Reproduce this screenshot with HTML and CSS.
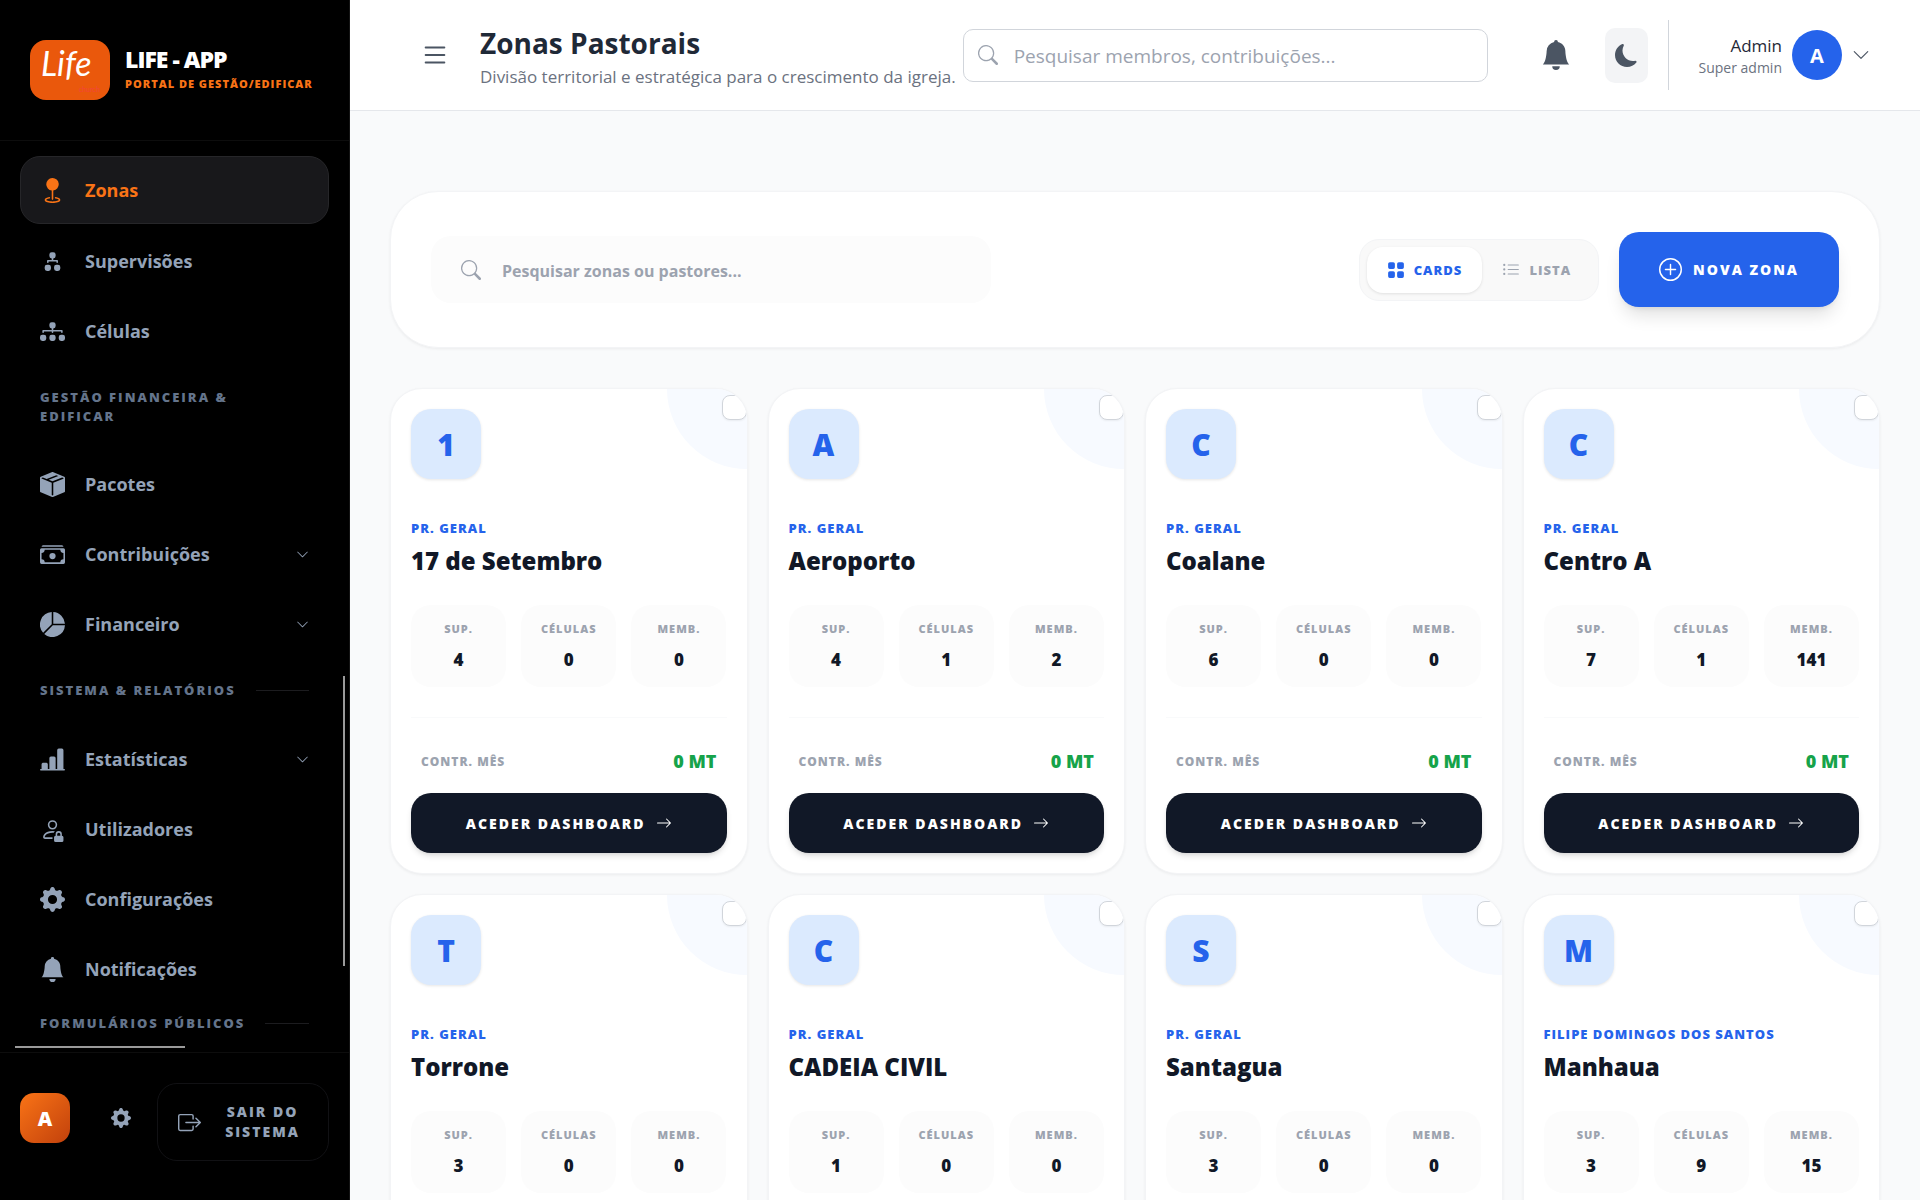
FILE: index.html
```html
<!DOCTYPE html>
<html lang="pt">
<head>
<meta charset="utf-8">
<meta name="viewport" content="width=device-width, initial-scale=1">
<title>Zonas Pastorais</title>
<link rel="stylesheet" href="styles.css">
</head>
<body>
<svg class="sprite" aria-hidden="true">
  <symbol id="i-geo" viewBox="0 0 16 16"><path d="M4 4a4 4 0 1 1 4.5 3.969V13.500a.5.5 0 0 1-1 0V7.970A4 4 0 0 1 4 3.999zm2.493 8.574a.5.5 0 0 1-.411.575c-.712.118-1.280.295-1.655.493a1.300 1.300 0 0 0-.37.265.3.3 0 0 0-.057.090V14l.002.008.016.033a.6.6 0 0 0 .145.150c.165.130.435.270.813.395.751.250 1.820.414 3.024.414s2.273-.163 3.024-.414c.378-.126.648-.265.813-.395a.6.6 0 0 0 .146-.150l.015-.033L12 14v-.004a.3.3 0 0 0-.057-.090 1.300 1.300 0 0 0-.37-.264c-.376-.198-.943-.375-1.655-.493a.5.5 0 1 1 .164-.986c.77.127 1.452.328 1.957.594C12.500 13 13 13.400 13 14c0 .426-.26.752-.544.977-.29.228-.68.413-1.116.558-.878.293-2.059.465-3.340.465s-2.462-.172-3.340-.465c-.436-.145-.826-.33-1.116-.558C3.260 14.752 3 14.426 3 14c0-.599.5-1 .961-1.243.505-.266 1.187-.467 1.957-.594a.5.5 0 0 1 .575.411"/></symbol>
  <symbol id="i-diagram2" viewBox="0 0 16 16"><path d="M6 3.5A1.5 1.5 0 0 1 7.5 2h1A1.5 1.5 0 0 1 10 3.5v1A1.5 1.5 0 0 1 8.5 6v1H11a.5.5 0 0 1 .5.5v1a.5.5 0 0 1-1 0V8h-5v.5a.5.5 0 0 1-1 0v-1A.5.5 0 0 1 5 7h2.500V6A1.5 1.5 0 0 1 6 4.500zm-3 8A1.5 1.5 0 0 1 4.500 10h1A1.5 1.5 0 0 1 7 11.500v1A1.5 1.5 0 0 1 5.500 14h-1A1.5 1.5 0 0 1 3 12.500zm6 0a1.5 1.5 0 0 1 1.500-1.500h1a1.5 1.5 0 0 1 1.500 1.500v1a1.5 1.5 0 0 1-1.500 1.500h-1A1.5 1.5 0 0 1 9 12.500z"/></symbol>
  <symbol id="i-diagram3" viewBox="0 0 16 16"><path d="M6 3.5A1.5 1.5 0 0 1 7.5 2h1A1.5 1.5 0 0 1 10 3.5v1A1.5 1.5 0 0 1 8.5 6v1H14a.5.5 0 0 1 .5.5v1a.5.5 0 0 1-1 0V8h-5v.5a.5.5 0 0 1-1 0V8h-5v.5a.5.5 0 0 1-1 0v-1A.5.5 0 0 1 2 7h5.500V6A1.5 1.5 0 0 1 6 4.500zm-6 8A1.5 1.5 0 0 1 1.500 10h1A1.5 1.5 0 0 1 4 11.500v1A1.5 1.5 0 0 1 2.500 14h-1A1.5 1.5 0 0 1 0 12.500zm6 0A1.5 1.5 0 0 1 7.500 10h1a1.5 1.5 0 0 1 1.500 1.500v1A1.5 1.5 0 0 1 8.500 14h-1A1.5 1.5 0 0 1 6 12.500zm6 0a1.5 1.5 0 0 1 1.500-1.500h1a1.5 1.5 0 0 1 1.500 1.500v1a1.5 1.5 0 0 1-1.500 1.500h-1a1.5 1.5 0 0 1-1.500-1.500z"/></symbol>
  <symbol id="i-box" viewBox="0 0 16 16"><path fill-rule="evenodd" d="M15.528 2.973a.75.75 0 0 1 .472.696v8.662a.75.75 0 0 1-.472.696l-7.250 2.900a.75.75 0 0 1-.557 0l-7.250-2.900A.75.75 0 0 1 0 12.331V3.669a.75.75 0 0 1 .471-.696L7.443.184l.01-.003.268-.108a.75.75 0 0 1 .558 0l.269.108.01.003zM10.404 2 4.250 4.461 1.846 3.500 1 3.839v.4l6.500 2.600v7.922l.5.200.5-.200V6.840l6.500-2.600v-.4l-.846-.339L8 5.961 5.596 5l6.154-2.461z"/></symbol>
  <symbol id="i-cash" viewBox="0 0 16 16"><path d="M1 3a1 1 0 0 1 1-1h12a1 1 0 0 1 1 1zm7 8a2 2 0 1 0 0-4 2 2 0 0 0 0 4"/><path d="M0 5a1 1 0 0 1 1-1h14a1 1 0 0 1 1 1v8a1 1 0 0 1-1 1H1a1 1 0 0 1-1-1zm3 0a2 2 0 0 1-2 2v4a2 2 0 0 1 2 2h10a2 2 0 0 1 2-2V7a2 2 0 0 1-2-2z"/></symbol>
  <symbol id="i-pie" viewBox="0 0 16 16"><path d="M15.985 8.500H8.207l-5.500 5.500a8 8 0 0 0 13.277-5.500zM2 13.292A8 8 0 0 1 7.500.015v7.778zM8.500.015V7.500h7.485A8 8 0 0 0 8.500.015"/></symbol>
  <symbol id="i-bars" viewBox="0 0 16 16"><path d="M11 2a1 1 0 0 1 1-1h2a1 1 0 0 1 1 1v12h.5a.5.5 0 0 1 0 1H.5a.5.5 0 0 1 0-1H1v-3a1 1 0 0 1 1-1h2a1 1 0 0 1 1 1v3h1V7a1 1 0 0 1 1-1h2a1 1 0 0 1 1 1v7h1z"/></symbol>
  <symbol id="i-person" viewBox="0 0 16 16"><path d="M11 5a3 3 0 1 1-6 0 3 3 0 0 1 6 0M8 7a2 2 0 1 0 0-4 2 2 0 0 0 0 4m0 5.996V14H3s-1 0-1-1 1-4 6-4q.845.002 1.544.107a4.500 4.500 0 0 0-.803.918A11 11 0 0 0 8 10c-2.290 0-3.516.68-4.168 1.332-.678.678-.83 1.418-.832 1.664zM9 13a1 1 0 0 1 1-1v-1a2 2 0 1 1 4 0v1a1 1 0 0 1 1 1v2a1 1 0 0 1-1 1h-4a1 1 0 0 1-1-1zm3-3a1 1 0 0 0-1 1v1h2v-1a1 1 0 0 0-1-1"/></symbol>
  <symbol id="i-gear" viewBox="0 0 16 16"><path d="M9.405 1.050c-.413-1.400-2.397-1.400-2.810 0l-.1.340a1.464 1.464 0 0 1-2.105.872l-.31-.17c-1.283-.698-2.686.705-1.987 1.987l.169.311c.446.82.023 1.841-.872 2.105l-.34.1c-1.400.413-1.400 2.397 0 2.810l.34.1a1.464 1.464 0 0 1 .872 2.105l-.17.31c-.698 1.283.705 2.686 1.987 1.987l.311-.169a1.464 1.464 0 0 1 2.105.872l.1.34c.413 1.400 2.397 1.400 2.810 0l.1-.34a1.464 1.464 0 0 1 2.105-.872l.31.17c1.283.698 2.686-.705 1.987-1.987l-.169-.311a1.464 1.464 0 0 1 .872-2.105l.34-.1c1.400-.413 1.400-2.397 0-2.810l-.34-.1a1.464 1.464 0 0 1-.872-2.105l.17-.31c.698-1.283-.705-2.686-1.987-1.987l-.311.169a1.464 1.464 0 0 1-2.105-.872zM8 10.930a2.929 2.929 0 1 1 0-5.860 2.929 2.929 0 0 1 0 5.858z"/></symbol>
  <symbol id="i-bell" viewBox="0 0 16 16"><path d="M8 16a2 2 0 0 0 2-2H6a2 2 0 0 0 2 2m.995-14.901a1 1 0 1 0-1.990 0A5 5 0 0 0 3 6c0 1.098-.5 6-2 7h14c-1.500-1-2-5.902-2-7 0-2.420-1.720-4.440-4.005-4.901"/></symbol>
  <symbol id="i-moon" viewBox="0 0 16 16"><path d="M6 .278a.77.77 0 0 1 .08.858 7.200 7.200 0 0 0-.878 3.460c0 4.021 3.278 7.277 7.318 7.277q.792-.001 1.533-.16a.79.79 0 0 1 .81.316.73.73 0 0 1-.031.893A8.350 8.350 0 0 1 8.344 16C3.734 16 0 12.286 0 7.710 0 4.266 2.114 1.312 5.124.060A.75.75 0 0 1 6 .278"/></symbol>
  <symbol id="i-search" viewBox="0 0 16 16"><path d="M11.742 10.344a6.500 6.500 0 1 0-1.397 1.398h-.001q.044.060.098.115l3.850 3.850a1 1 0 0 0 1.415-1.414l-3.850-3.850a1 1 0 0 0-.115-.1zM12 6.500a5.500 5.500 0 1 1-11 0 5.500 5.500 0 0 1 11 0"/></symbol>
  <symbol id="i-list" viewBox="0 0 16 16"><path d="M2.500 12a.5.5 0 0 1 .5-.5h10a.5.5 0 0 1 0 1H3a.5.5 0 0 1-.5-.5m0-4a.5.5 0 0 1 .5-.5h10a.5.5 0 0 1 0 1H3a.5.5 0 0 1-.5-.5m0-4a.5.5 0 0 1 .5-.5h10a.5.5 0 0 1 0 1H3a.5.5 0 0 1-.5-.5"/></symbol>
  <symbol id="i-listul" viewBox="0 0 16 16"><path d="M5 11.500a.5.5 0 0 1 .5-.5h9a.5.5 0 0 1 0 1h-9a.5.5 0 0 1-.5-.5m0-4a.5.5 0 0 1 .5-.5h9a.5.5 0 0 1 0 1h-9a.5.5 0 0 1-.5-.5m0-4a.5.5 0 0 1 .5-.5h9a.5.5 0 0 1 0 1h-9a.5.5 0 0 1-.5-.5m-3 1a1 1 0 1 0 0-2 1 1 0 0 0 0 2m0 4a1 1 0 1 0 0-2 1 1 0 0 0 0 2m0 4a1 1 0 1 0 0-2 1 1 0 0 0 0 2"/></symbol>
  <symbol id="i-grid" viewBox="0 0 16 16"><path d="M1 2.500A1.5 1.5 0 0 1 2.500 1h3A1.5 1.5 0 0 1 7 2.500v3A1.5 1.5 0 0 1 5.500 7h-3A1.5 1.5 0 0 1 1 5.500zm8 0A1.5 1.5 0 0 1 10.500 1h3A1.5 1.5 0 0 1 15 2.500v3A1.5 1.5 0 0 1 13.500 7h-3A1.5 1.5 0 0 1 9 5.500zm-8 8A1.5 1.5 0 0 1 2.500 9h3A1.5 1.5 0 0 1 7 10.500v3A1.5 1.5 0 0 1 5.500 15h-3A1.5 1.5 0 0 1 1 13.500zm8 0A1.5 1.5 0 0 1 10.500 9h3a1.5 1.5 0 0 1 1.500 1.500v3a1.5 1.5 0 0 1-1.500 1.500h-3A1.5 1.5 0 0 1 9 13.500z"/></symbol>
  <symbol id="i-plus" viewBox="0 0 16 16"><path d="M8 15A7 7 0 1 1 8 1a7 7 0 0 1 0 14m0 1A8 8 0 1 0 8 0a8 8 0 0 0 0 16"/><path d="M8 4a.5.5 0 0 1 .5.5v3h3a.5.5 0 0 1 0 1h-3v3a.5.5 0 0 1-1 0v-3h-3a.5.5 0 0 1 0-1h3v-3A.5.5 0 0 1 8 4"/></symbol>
  <symbol id="i-arrow" viewBox="0 0 16 16"><path d="M1 8a.5.5 0 0 1 .5-.5h11.793l-3.147-3.146a.5.5 0 0 1 .708-.708l4 4a.5.5 0 0 1 0 .708l-4 4a.5.5 0 0 1-.708-.708L13.293 8.500H1.500A.5.5 0 0 1 1 8"/></symbol>
  <symbol id="i-exit" viewBox="0 0 16 16"><path d="M10 12.500a.5.5 0 0 1-.5.5h-8a.5.5 0 0 1-.5-.5v-9a.5.5 0 0 1 .5-.5h8a.5.5 0 0 1 .5.5v2a.5.5 0 0 0 1 0v-2A1.5 1.5 0 0 0 9.500 2h-8A1.5 1.5 0 0 0 0 3.500v9A1.5 1.5 0 0 0 1.500 14h8a1.5 1.5 0 0 0 1.500-1.500v-2a.5.5 0 0 0-1 0z"/><path d="M15.854 8.354a.5.5 0 0 0 0-.708l-3-3a.5.5 0 0 0-.708.708L14.293 7.500H5.500a.5.5 0 0 0 0 1h8.793l-2.147 2.146a.5.5 0 0 0 .708.708z"/></symbol>
  <symbol id="i-chev" viewBox="0 0 16 16"><path d="M1.646 4.646a.5.5 0 0 1 .708 0L8 10.293l5.646-5.647a.5.5 0 0 1 .708.708l-6 6a.5.5 0 0 1-.708 0l-6-6a.5.5 0 0 1 0-.708"/></symbol>
</svg>

<div class="app">
  <aside class="sidebar">
    <div class="brand">
      <svg class="brand-logo" viewBox="0 0 80 60" role="img" aria-label="Life church">
        <text class="logo-name" x="11" y="36">Life</text>
        <text class="logo-sub" x="49" y="52">church</text>
      </svg>
      <div>
        <div class="brand-name">LIFE - APP</div>
        <div class="brand-sub">PORTAL DE GESTÃO/EDIFICAR</div>
      </div>
    </div>
    <nav class="nav">
      <a class="nav-item active" href="#"><svg class="icon-25"><use href="#i-geo"/></svg>Zonas</a>
      <a class="nav-item" href="#"><svg class="icon-25"><use href="#i-diagram2"/></svg>Supervisões</a>
      <a class="nav-item" href="#"><svg class="icon-25"><use href="#i-diagram3"/></svg>Células</a>
      <h2 class="nav-heading">GESTÃO FINANCEIRA &amp; EDIFICAR</h2>
      <a class="nav-item" href="#"><svg class="icon-25"><use href="#i-box"/></svg>Pacotes</a>
      <a class="nav-item" href="#"><svg class="icon-25"><use href="#i-cash"/></svg>Contribuições<svg class="chevron"><use href="#i-chev"/></svg></a>
      <a class="nav-item" href="#"><svg class="icon-25"><use href="#i-pie"/></svg>Financeiro<svg class="chevron"><use href="#i-chev"/></svg></a>
      <h2 class="nav-heading ruled">SISTEMA &amp; RELATÓRIOS</h2>
      <a class="nav-item" href="#"><svg class="icon-25"><use href="#i-bars"/></svg>Estatísticas<svg class="chevron"><use href="#i-chev"/></svg></a>
      <a class="nav-item" href="#"><svg class="icon-25"><use href="#i-person"/></svg>Utilizadores</a>
      <a class="nav-item" href="#"><svg class="icon-25"><use href="#i-gear"/></svg>Configurações</a>
      <a class="nav-item" href="#"><svg class="icon-25"><use href="#i-bell"/></svg>Notificações</a>
      <h2 class="nav-heading ruled last">FORMULÁRIOS PÚBLICOS</h2>
      <span class="thumb-y"></span>
      <span class="thumb-x"></span>
    </nav>
    <div class="side-foot">
      <span class="side-avatar">A</span>
      <button class="side-gear" aria-label="Definições"><svg class="icon-20"><use href="#i-gear"/></svg></button>
      <button class="logout"><svg class="icon-23"><use href="#i-exit"/></svg><span>SAIR DO SISTEMA</span></button>
    </div>
  </aside>

  <div class="page">
    <header class="topbar">
      <button class="menu" aria-label="Menu"><svg class="icon-30"><use href="#i-list"/></svg></button>
      <div class="heading">
        <h1>Zonas Pastorais</h1>
        <p>Divisão territorial e estratégica para o crescimento da igreja.</p>
      </div>
      <label class="top-search"><svg class="icon-20"><use href="#i-search"/></svg><input type="text" aria-label="Pesquisar" placeholder="Pesquisar membros, contribuições..."></label>
      <button class="bell" aria-label="Notificações"><svg class="icon-30"><use href="#i-bell"/></svg></button>
      <button class="moon" aria-label="Modo escuro"><svg class="icon-23"><use href="#i-moon"/></svg></button>
      <button class="user">
        <span class="user-text"><span class="user-name">Admin</span><span class="user-role">Super admin</span></span>
        <span class="user-avatar">A</span>
        <svg class="icon-18"><use href="#i-chev"/></svg>
      </button>
    </header>

    <main class="content">
      <section class="toolbar">
        <label class="zone-search"><svg class="icon-20"><use href="#i-search"/></svg><input type="text" aria-label="Pesquisar zonas" placeholder="Pesquisar zonas ou pastores..."></label>
        <div class="toggle">
          <button class="on"><svg class="icon-18"><use href="#i-grid"/></svg>CARDS</button>
          <button><svg class="icon-18"><use href="#i-listul"/></svg>LISTA</button>
        </div>
        <button class="new-zone"><svg class="icon-23"><use href="#i-plus"/></svg>NOVA ZONA</button>
      </section>

      <section class="cards">
        <article class="card">
          <input class="pick" type="checkbox" aria-label="Selecionar 17 de Setembro">
          <span class="badge">1</span>
          <p class="pastor">PR. GERAL</p>
          <h3>17 de Setembro</h3>
          <dl class="stats"><div><dt>SUP.</dt><dd>4</dd></div><div><dt>CÉLULAS</dt><dd>0</dd></div><div><dt>MEMB.</dt><dd>0</dd></div></dl>
          <div class="month"><span>CONTR. MÊS</span><strong>0 MT</strong></div>
          <a class="open" href="#">ACEDER DASHBOARD<svg class="icon-16"><use href="#i-arrow"/></svg></a>
        </article>
        <article class="card">
          <input class="pick" type="checkbox" aria-label="Selecionar Aeroporto">
          <span class="badge">A</span>
          <p class="pastor">PR. GERAL</p>
          <h3>Aeroporto</h3>
          <dl class="stats"><div><dt>SUP.</dt><dd>4</dd></div><div><dt>CÉLULAS</dt><dd>1</dd></div><div><dt>MEMB.</dt><dd>2</dd></div></dl>
          <div class="month"><span>CONTR. MÊS</span><strong>0 MT</strong></div>
          <a class="open" href="#">ACEDER DASHBOARD<svg class="icon-16"><use href="#i-arrow"/></svg></a>
        </article>
        <article class="card">
          <input class="pick" type="checkbox" aria-label="Selecionar Coalane">
          <span class="badge">C</span>
          <p class="pastor">PR. GERAL</p>
          <h3>Coalane</h3>
          <dl class="stats"><div><dt>SUP.</dt><dd>6</dd></div><div><dt>CÉLULAS</dt><dd>0</dd></div><div><dt>MEMB.</dt><dd>0</dd></div></dl>
          <div class="month"><span>CONTR. MÊS</span><strong>0 MT</strong></div>
          <a class="open" href="#">ACEDER DASHBOARD<svg class="icon-16"><use href="#i-arrow"/></svg></a>
        </article>
        <article class="card">
          <input class="pick" type="checkbox" aria-label="Selecionar Centro A">
          <span class="badge">C</span>
          <p class="pastor">PR. GERAL</p>
          <h3>Centro A</h3>
          <dl class="stats"><div><dt>SUP.</dt><dd>7</dd></div><div><dt>CÉLULAS</dt><dd>1</dd></div><div><dt>MEMB.</dt><dd>141</dd></div></dl>
          <div class="month"><span>CONTR. MÊS</span><strong>0 MT</strong></div>
          <a class="open" href="#">ACEDER DASHBOARD<svg class="icon-16"><use href="#i-arrow"/></svg></a>
        </article>
        <article class="card">
          <input class="pick" type="checkbox" aria-label="Selecionar Torrone">
          <span class="badge">T</span>
          <p class="pastor">PR. GERAL</p>
          <h3>Torrone</h3>
          <dl class="stats"><div><dt>SUP.</dt><dd>3</dd></div><div><dt>CÉLULAS</dt><dd>0</dd></div><div><dt>MEMB.</dt><dd>0</dd></div></dl>
        </article>
        <article class="card">
          <input class="pick" type="checkbox" aria-label="Selecionar CADEIA CIVIL">
          <span class="badge">C</span>
          <p class="pastor">PR. GERAL</p>
          <h3>CADEIA CIVIL</h3>
          <dl class="stats"><div><dt>SUP.</dt><dd>1</dd></div><div><dt>CÉLULAS</dt><dd>0</dd></div><div><dt>MEMB.</dt><dd>0</dd></div></dl>
        </article>
        <article class="card">
          <input class="pick" type="checkbox" aria-label="Selecionar Santagua">
          <span class="badge">S</span>
          <p class="pastor">PR. GERAL</p>
          <h3>Santagua</h3>
          <dl class="stats"><div><dt>SUP.</dt><dd>3</dd></div><div><dt>CÉLULAS</dt><dd>0</dd></div><div><dt>MEMB.</dt><dd>0</dd></div></dl>
        </article>
        <article class="card">
          <input class="pick" type="checkbox" aria-label="Selecionar Manhaua">
          <span class="badge">M</span>
          <p class="pastor">FILIPE DOMINGOS DOS SANTOS</p>
          <h3>Manhaua</h3>
          <dl class="stats"><div><dt>SUP.</dt><dd>3</dd></div><div><dt>CÉLULAS</dt><dd>9</dd></div><div><dt>MEMB.</dt><dd>15</dd></div></dl>
        </article>
      </section>
    </main>
  </div>
</div>
</body>
</html>
```
FILE: styles.css
```css
* { box-sizing: border-box; margin: 0; padding: 0; }
body { font-family: "Open Sans", "Noto Sans", sans-serif; color: #111827; background: #f9fafb; }
button, input { font: inherit; color: inherit; border: 0; background: none; }
button { cursor: pointer; }
a { color: inherit; text-decoration: none; }
svg { fill: currentColor; flex: none; }
.sprite { display: none; }
.icon-16 { width: 16px; height: 16px; }
.icon-18 { width: 18px; height: 18px; }
.icon-20 { width: 20px; height: 20px; }
.icon-23 { width: 23px; height: 23px; }
.icon-25 { width: 25px; height: 25px; }
.icon-30 { width: 30px; height: 30px; }

.app { display: grid; grid-template-columns: 350px minmax(0, 1fr); height: 100vh; overflow: hidden; }

/* Sidebar */
.sidebar { display: flex; flex-direction: column; min-height: 0; background: #000; border-right: 1px solid #141414; color: #94a3b8; }
.brand { display: flex; gap: 15px; padding: 40px 0 40px 30px; border-bottom: 1px solid #0d0d0d; white-space: nowrap; }
.brand-logo { width: 80px; height: 60px; border-radius: 16px; background: #ea580c; }
.logo-name { font: italic 34px "Lato", sans-serif; fill: #fff; }
.logo-sub { font: 7px "Lato", sans-serif; fill: #f4433c; }
.brand-name { margin-top: 4px; font-size: 23px; line-height: 30px; font-weight: 800; letter-spacing: -1px; color: #fff; }
.brand-sub { font-size: 11px; line-height: 20px; font-weight: 800; letter-spacing: 1px; color: #f97316; }
.nav { position: relative; flex: 1; min-height: 0; display: flex; flex-direction: column; gap: 4px; padding: 15px 20px 0; overflow: hidden; }
.nav-item { flex: none; display: flex; align-items: center; gap: 20px; height: 66px; padding: 0 20px; border-radius: 20px; font-size: 18px; font-weight: 700; }
.nav-item.active { height: 68px; padding: 0 19px; background: #18181b; border: 1px solid #262629; color: #f97316; }
.chevron { width: 13px; height: 13px; margin-left: auto; }
.nav-heading { flex: none; display: flex; align-items: center; gap: 20px; padding: 20px 40px 21px 20px; font-size: 13px; line-height: 19px; font-weight: 800; letter-spacing: 2px; color: #64748b; }
.nav-heading.ruled::after { content: ""; flex: 1; height: 1px; background: #1c1c1f; }
.nav-heading.ruled { white-space: nowrap; padding-right: 20px; padding-bottom: 22px; }
.nav-heading.last { padding-top: 8px; }
.thumb-y { position: absolute; right: 4px; top: 535px; width: 2px; height: 290px; background: #9a9a9a; }
.thumb-x { position: absolute; left: 15px; bottom: 4px; width: 170px; height: 2px; background: #9a9a9a; }
.side-foot { display: flex; align-items: center; padding: 30px 20px 39px; border-top: 1px solid #0d0d0d; }
.side-avatar, .side-gear { display: grid; place-items: center; height: 50px; margin-bottom: 8px; }
.side-avatar { width: 50px; border-radius: 14px; background: linear-gradient(135deg, #f97316, #c2410c); color: #fff; font-size: 20px; font-weight: 800; }
.side-gear { width: 102px; }
.logout { flex: 1; display: flex; align-items: center; gap: 16px; height: 78px; margin-left: -15px; padding: 0 20px; border: 1px solid #111114; border-radius: 20px; font-size: 14px; line-height: 20px; font-weight: 800; letter-spacing: 2px; }
.logout span { flex: 1; }

/* Top bar */
.page { min-width: 0; overflow: hidden; }
.topbar { display: flex; align-items: center; height: 111px; padding: 0 40px; background: #fff; border-bottom: 1px solid #e5e7eb; }
.menu { display: grid; margin-left: 30px; color: #4b5563; }
.heading { margin-left: 30px; padding-top: 6px; white-space: nowrap; }
h1 { font-size: 28px; line-height: 38px; font-weight: 700; color: #1f2937; }
.heading p { font-size: 17px; line-height: 30px; color: #6b7280; }
.top-search { flex: 1; display: flex; align-items: center; gap: 16px; height: 53px; margin-left: 7px; padding: 0 14px; border: 1px solid #d1d5db; border-radius: 10px; color: #9ca3af; }
.top-search input { flex: 1; min-width: 0; padding-top: 2px; font-size: 19px; }
::placeholder { color: #9ca3af; opacity: 1; }
.bell { display: grid; margin-left: 53px; color: #4b5563; }
.moon { display: grid; place-items: center; width: 43px; height: 55px; margin-left: 34px; border-radius: 10px; background: #f3f4f6; color: #4b5563; }
.user { display: flex; align-items: center; gap: 10px; height: 70px; margin-left: 20px; padding: 0 10px 0 30px; border-left: 1px solid #d1d5db; color: #4b5563; }
.user-text { display: grid; text-align: right; }
.user-name { font-size: 17px; line-height: 25px; color: #1f2937; }
.user-role { font-size: 14px; line-height: 20px; color: #6b7280; }
.user-avatar { display: grid; place-items: center; width: 50px; height: 50px; border-radius: 50%; background: #2563eb; color: #fff; font-size: 20px; font-weight: 700; }

/* Content */
.content { display: flex; flex-direction: column; gap: 40px; padding: 80px 40px; }
.toolbar { display: flex; align-items: center; height: 157px; padding: 0 40px; background: #fff; border: 1px solid #f3f4f6; border-radius: 48px; box-shadow: 0 1px 3px rgba(0,0,0,.06); }
.zone-search { display: flex; align-items: center; gap: 21px; width: 560px; height: 67px; padding: 0 30px; border-radius: 20px; background: #fcfcfc; color: #9ca3af; }
.zone-search input { flex: 1; min-width: 0; padding-top: 2px; font-size: 16px; font-weight: 700; }
.toggle { display: flex; align-items: center; height: 62px; margin-left: auto; padding: 0 7px; border: 1px solid #f3f4f6; border-radius: 20px; background: #f9f9f9; color: #9ca3af; }
.toggle button { display: flex; align-items: center; gap: 9px; height: 46px; padding: 0 20px; border-radius: 16px; font-size: 13px; font-weight: 800; letter-spacing: 1px; }
.toggle .on { background: #fff; color: #2563eb; box-shadow: 0 1px 3px rgba(0,0,0,.1); }
.new-zone { display: flex; align-items: center; gap: 11px; height: 75px; margin-left: 20px; padding: 0 40px; border-radius: 20px; background: #2563eb; color: #fff; font-size: 14px; font-weight: 800; letter-spacing: 2px; box-shadow: 0 12px 18px -4px rgba(0,0,0,.12), 0 4px 6px -4px rgba(0,0,0,.12); }

.cards { display: grid; grid-template-columns: repeat(4, minmax(0, 1fr)); gap: 20px; }
.card { position: relative; height: 486px; padding: 20px; overflow: hidden; background: #fff; border: 1px solid #f3f4f6; border-radius: 32px; box-shadow: 0 1px 3px rgba(0,0,0,.06); }
.card::before { content: ""; position: absolute; top: -80px; right: -80px; width: 160px; height: 160px; border-radius: 50%; background: #f7faff; }
.pick { position: absolute; top: 6px; right: 0; width: 25px; height: 25px; appearance: none; border: 1px solid #d1d5db; border-radius: 8px; background: #fff; box-shadow: 0 1px 2px rgba(0,0,0,.06); }
.badge { display: grid; place-items: center; width: 70px; height: 70px; border-radius: 20px; background: #dbeafe; color: #2563eb; font-size: 30px; font-weight: 800; box-shadow: 0 1px 3px rgba(0,0,0,.1); }
.pastor { margin-top: 39px; font-size: 13px; line-height: 20px; font-weight: 800; letter-spacing: 1px; color: #2563eb; white-space: nowrap; }
h3 { margin-top: 6px; font-size: 24px; line-height: 34px; font-weight: 800; }
.stats { display: grid; grid-template-columns: repeat(3, minmax(0, 1fr)); gap: 15px; margin-top: 27px; }
.stats div { height: 82px; padding-top: 14px; border-radius: 20px; background: #fcfcfc; text-align: center; }
dt { font-size: 11px; line-height: 20px; font-weight: 800; letter-spacing: 1px; color: #9ca3af; }
dd { font-size: 17px; line-height: 24px; font-weight: 800; margin-top: 9px; }
.month { display: flex; align-items: center; justify-content: space-between; margin-top: 30px; padding: 30px 10px 18px; border-top: 1px solid #f9fafb; line-height: 27px; }
.month span { font-size: 12px; line-height: 24px; font-weight: 800; letter-spacing: 1px; color: #9ca3af; }
.month strong { font-size: 18px; font-weight: 800; color: #16a34a; }
.open { display: flex; align-items: center; justify-content: center; gap: 10px; height: 60px; border-radius: 20px; background: #111827; color: #fff; font-size: 14px; font-weight: 800; letter-spacing: 2px; white-space: nowrap; box-shadow: 0 4px 6px -1px rgba(0,0,0,.12), 0 2px 4px -2px rgba(0,0,0,.1); }
```
